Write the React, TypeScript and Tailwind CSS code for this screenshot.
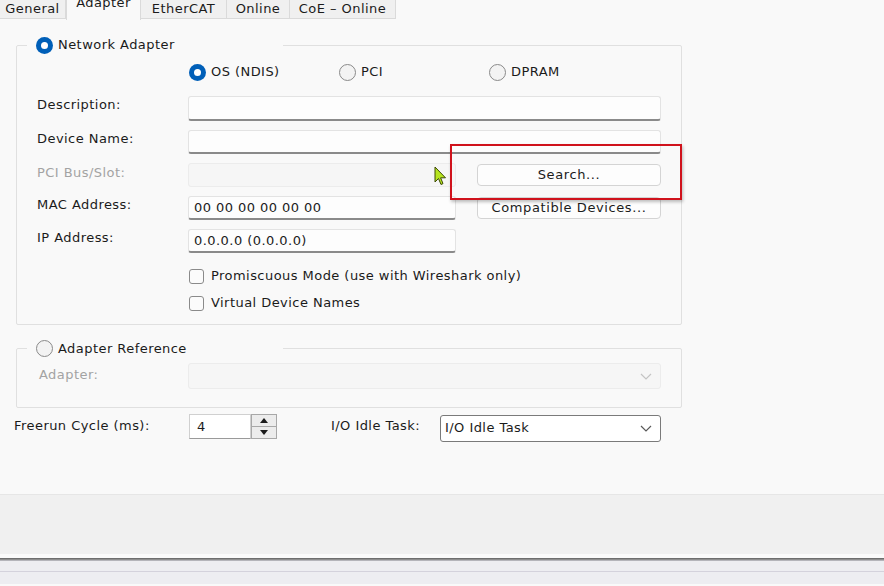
import React from 'react';

const Radio: React.FC<{ checked?: boolean }> = ({ checked }) =>
  checked ? (
    <span className="w-[17px] h-[17px] rounded-full bg-[#005fb8] flex items-center justify-center shrink-0">
      <span className="w-[7px] h-[7px] rounded-full bg-white" />
    </span>
  ) : (
    <span className="w-[17px] h-[17px] rounded-full border border-[#8a8a8a] bg-[#f3f3f3] shrink-0" />
  );

const Checkbox: React.FC = () => (
  <span className="w-[15px] h-[15px] rounded-[3px] border border-[#8a8a8a] bg-[#fbfbfb] shrink-0" />
);

const TextBox: React.FC<{ width: string; value?: string; disabled?: boolean; tall?: boolean }> = ({
  width,
  value,
  disabled,
  tall,
}) => (
  <div
    className={`${width} ${tall ? 'h-[25px]' : 'h-[24px]'} rounded-[3px] border px-[5px] flex items-center ${
      disabled ? 'border-[#ececec] bg-[#f6f6f6]' : 'border-[#e3e3e3] border-b-[#8a8a8a] border-b-2 bg-[#fdfdfd]'
    }`}
  >
    {value}
  </div>
);

const Button: React.FC<{ label: string }> = ({ label }) => (
  <button className="ml-[21px] w-[184px] h-[22px] rounded-[4px] border border-[#d4d4d4] bg-[#fdfdfd] text-[#1b1b1b] tracking-[0.6px] flex items-center justify-center">
    {label}
  </button>
);

const Chevron: React.FC<{ color: string }> = ({ color }) => (
  <svg width="12" height="7" viewBox="0 0 12 7" fill="none">
    <path d="M1 1 L6 6 L11 1" stroke={color} strokeWidth="1.2" />
  </svg>
);

const tabs = ['General', 'Adapter', 'EtherCAT', 'Online', 'CoE – Online'];
const tabWidths = ['w-[66px]', 'w-[75px]', 'w-[86px]', 'w-[63px]', 'w-[106px]'];

const App: React.FC = () => {
  return (
    <div className="relative w-[884px] h-[586px] overflow-hidden bg-[#f9f9f9] font-['DejaVu_Sans',sans-serif] text-[13px] tracking-[0.45px] text-[#1b1b1b]">
      {/* tab strip */}
      <div className="h-[19px] flex items-stretch">
        {tabs.map((t, i) =>
          i === 1 ? (
            <div
              key={t}
              className={`${tabWidths[i]} -mt-[4px] h-[24px] bg-[#f9f9f9] border-x border-[#dadada] flex justify-center leading-[14px]`}
            >
              {t}
            </div>
          ) : (
            <div
              key={t}
              className={`${tabWidths[i]} bg-[#f0f0f0] border-r border-b border-[#dadada] flex justify-center items-center leading-[14px] -mt-[3px] pt-[2px]`}
            >
              {t}
            </div>
          )
        )}
      </div>

      {/* page body */}
      <div className="h-[475px] pt-[17px]">
        {/* Network Adapter group */}
        <fieldset className="ml-[16px] w-[666px] border border-[#e0e0e0] rounded-[2px] pb-[12px]">
          <legend className="ml-[10px] w-[256px] h-[18px] pl-[9px] flex items-center gap-[5px] leading-[18px]">
            <Radio checked />
            <span>Network Adapter</span>
          </legend>

          <div className="mt-[9px] h-[18px] flex items-center pl-[171px]">
            <div className="w-[151px] flex items-center gap-[5px] pl-[1px]">
              <Radio checked />
              <span>OS (NDIS)</span>
            </div>
            <div className="w-[150px] flex items-center gap-[5px]">
              <Radio />
              <span>PCI</span>
            </div>
            <div className="flex items-center gap-[5px]">
              <Radio />
              <span>DPRAM</span>
            </div>
          </div>

          <div className="mt-[15px] flex items-start pl-[20px]">
            <span className="w-[151px] leading-[15px] pt-[1px]">Description:</span>
            <TextBox width="w-[473px]" tall />
          </div>
          <div className="mt-[9px] flex items-start pl-[20px]">
            <span className="w-[151px] leading-[15px] pt-[1px]">Device Name:</span>
            <TextBox width="w-[473px]" />
          </div>
          <div className="mt-[9px] flex items-start pl-[20px]">
            <span className="w-[151px] leading-[15px] pt-[2px] text-[#a3a3a3]">PCI Bus/Slot:</span>
            <TextBox width="w-[268px]" disabled />
            <div className="self-center">
              <Button label="Search..." />
            </div>
          </div>
          <div className="mt-[9px] flex items-start pl-[20px]">
            <span className="w-[151px] leading-[15px] pt-[1px]">MAC Address:</span>
            <TextBox width="w-[268px]" value="00 00 00 00 00 00" />
            <div className="self-center">
              <Button label="Compatible Devices..." />
            </div>
          </div>
          <div className="mt-[9px] flex items-start pl-[20px]">
            <span className="w-[151px] leading-[15px] pt-[1px]">IP Address:</span>
            <TextBox width="w-[268px]" value="0.0.0.0 (0.0.0.0)" />
          </div>

          <div className="mt-[14px] h-[18px] flex items-center gap-[7px] pl-[172px]">
            <Checkbox />
            <span>Promiscuous Mode (use with Wireshark only)</span>
          </div>
          <div className="mt-[9px] h-[18px] flex items-center gap-[7px] pl-[172px]">
            <Checkbox />
            <span>Virtual Device Names</span>
          </div>
        </fieldset>

        {/* Adapter Reference group */}
        <fieldset className="mt-[14px] ml-[16px] w-[666px] border border-[#e0e0e0] rounded-[2px] pb-[18px]">
          <legend className="ml-[10px] w-[256px] h-[18px] pl-[9px] flex items-center gap-[5px] leading-[18px]">
            <Radio />
            <span className="pt-[1px]">Adapter Reference</span>
          </legend>
          <div className="mt-[6px] flex items-start pl-[22px]">
            <span className="w-[149px] leading-[15px] pt-[4px] text-[#a3a3a3]">Adapter:</span>
            <div className="w-[473px] h-[26px] rounded-[3px] border border-[#ececec] bg-[#f6f6f6] flex items-center justify-end pr-[8px]">
              <Chevron color="#c4c4c4" />
            </div>
          </div>
        </fieldset>

        {/* bottom row */}
        <div className="mt-[6px] flex items-start pl-[14px] h-[28px]">
          <span className="w-[175px] leading-[15px] pt-[4px]">Freerun Cycle (ms):</span>
          <div className="w-[62px] h-[25px] bg-white border border-[#d0d0d0] border-b-[#9a9a9a] flex items-center pl-[7px]">4</div>
          <div className="w-[26px] h-[25px] border border-[#a8a8a8] bg-[#ececec] flex flex-col">
            <div className="flex-1 flex items-center justify-center border-b border-[#a8a8a8]">
              <svg width="8" height="5" viewBox="0 0 8 5"><path d="M0 5 L4 0 L8 5 Z" fill="#1b1b1b" /></svg>
            </div>
            <div className="flex-1 flex items-center justify-center">
              <svg width="8" height="5" viewBox="0 0 8 5"><path d="M0 0 L4 5 L8 0 Z" fill="#1b1b1b" /></svg>
            </div>
          </div>
          <span className="ml-[54px] w-[109px] leading-[15px] pt-[4px]">I/O Idle Task:</span>
          <div className="mt-[1px] w-[221px] h-[27px] rounded-[3px] border border-[#7a7a7a] bg-white flex items-center justify-between pl-[4px] pr-[8px]">
            <span className="-mt-[1px]">I/O Idle Task</span>
            <Chevron color="#5a5a5a" />
          </div>
        </div>
      </div>

      {/* bottom strip */}
      <div className="h-[60px] bg-[#f0f0f0] border-t border-[#e6e6e6]" />
      <div className="h-[4px] bg-[#fafafa]" />
      <div className="h-[1px] bg-[#6e6e6e]" />
      <div className="h-[1px] bg-[#8e8e8e]" />
      <div className="h-[1px] bg-[#b4b4ba]" />
      <div className="h-[10px] bg-[#ededf1]" />
      <div className="h-[1px] bg-[#d4d2dc]" />
      <div className="h-[12px] bg-[#ededf1]" />

      {/* highlight overlay */}
      <div className="absolute left-[450px] top-[144px] w-[232px] h-[56px] border-2 border-[#d0121c] shadow-[1px_2px_3px_rgba(0,0,0,0.25)]" />

      {/* mouse pointer */}
      <svg className="absolute left-[434px] top-[166px]" width="13" height="20" viewBox="0 0 13 20">
        <path d="M1 1 L1 16 L4.5 12.5 L7 18.5 L9 17.6 L6.6 11.8 L11.5 11.8 Z" fill="#b6e51f" stroke="#3d4a05" strokeWidth="1" strokeLinejoin="round" />
      </svg>
    </div>
  );
};

export default App;
